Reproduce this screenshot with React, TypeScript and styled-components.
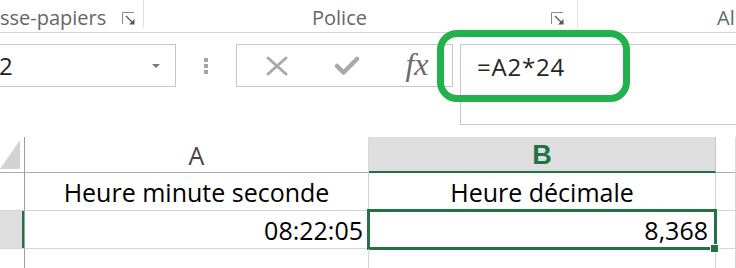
import React from 'react';
import styled, { createGlobalStyle } from 'styled-components';

// Global page reset
const GlobalStyle = createGlobalStyle`
  html, body {
    margin: 0;
    padding: 0;
    background: #ffffff;
    overflow: hidden;
  }
  body {
    width: 736px;
    height: 268px;
    font-family: "Open Sans", "Noto Sans", sans-serif;
  }
`;

const Screen = styled.div`
  position: relative;
  width: 736px;
  height: 268px;
  overflow: hidden;
`;

// Ribbon group labels
const Ribbon = styled.div`
  display: flex;
  height: 32px;
  border-bottom: 1px solid #d6d6d6;
`;

const Group = styled.div<{ $width?: number }>`
  display: flex;
  align-items: flex-start;
  width: ${p => (p.$width ? `${p.$width}px` : 'auto')};
  flex: ${p => (p.$width ? 'none' : '1')};
  height: 28px;
  border-right: ${p => (p.$width ? '1px solid #e1e1e1' : 'none')};
`;

const GroupLabel = styled.div<{ $align?: string; $pad?: number }>`
  flex: 1;
  text-align: ${p => p.$align || 'center'};
  padding-left: ${p => p.$pad || 0}px;
  font-size: 20px;
  line-height: 34px;
  margin-top: 1px;
  color: #666666;
  white-space: nowrap;
`;

const Launcher = styled.svg`
  flex: none;
  width: 13px;
  height: 13px;
  margin: 12px 13px 0 16px;
`;

// Formula bar
const FormulaRow = styled.div`
  display: flex;
  align-items: flex-start;
  padding-top: 11px;
  height: 81px;
`;

const NameBox = styled.div`
  flex: none;
  display: flex;
  align-items: center;
  width: 175px;
  height: 41px;
  border: 1px solid #c6c6c6;
  border-left: none;
  font-size: 24px;
  color: #222;
`;

const NameText = styled.span`
  flex: 1;
  margin-left: -1px;
`;

const DropArrow = styled.span`
  width: 0;
  height: 0;
  margin-right: 15px;
  border-left: 4px solid transparent;
  border-right: 4px solid transparent;
  border-top: 4px solid #777;
`;

const Grip = styled.div`
  flex: none;
  display: flex;
  flex-direction: column;
  gap: 2px;
  width: 4px;
  margin: 14px 28px 0 28px;
`;

const GripDot = styled.span`
  width: 4px;
  height: 4px;
  background: #a4a4a4;
`;

const ButtonBox = styled.div`
  flex: none;
  display: flex;
  align-items: center;
  box-sizing: border-box;
  width: 217px;
  height: 43px;
  padding-left: 5px;
  border: 1px solid #c6c6c6;
`;

const ToolSlot = styled.div`
  width: 70px;
  display: flex;
  justify-content: center;
  align-items: center;
`;

const Fx = styled.span`
  font-family: "Liberation Serif", "DejaVu Serif", serif;
  font-style: italic;
  font-size: 32px;
  color: #6a6a6a;
  line-height: 30px;
  margin-top: -4px;
`;

const FormulaInput = styled.div`
  flex: 1;
  height: 79px;
  margin-left: 7px;
  margin-right: -10px;
  border: 1px solid #c6c6c6;
  padding-left: 16px;
  font-size: 24px;
  letter-spacing: 0.8px;
  line-height: 44px;
  color: #262626;
`;

// Annotation drawn over the formula bar
const Highlight = styled.div`
  position: absolute;
  left: 437px;
  top: 30px;
  width: 193px;
  height: 72px;
  box-sizing: border-box;
  border: 7px solid #22b14c;
  border-radius: 20px;
  pointer-events: none;
`;

// Sheet grid
const Sheet = styled.div`
  display: grid;
  grid-template-columns: 25px 344px 347px 1fr;
  grid-template-rows: 36px 38px 38px 38px;
  margin-top: 12px;
  font-family: "Open Sans", "Noto Sans", sans-serif;
  font-size: 25px;
`;

const Corner = styled.div`
  border-right: 1px solid #9e9e9e;
  border-bottom: 1px solid #ababab;
  display: flex;
  align-items: flex-end;
  padding-bottom: 3px;
  box-sizing: border-box;
`;

const ColHeader = styled.div<{ $active?: boolean }>`
  box-sizing: border-box;
  display: flex;
  justify-content: center;
  align-items: center;
  background: ${p => (p.$active ? '#dedede' : '#ffffff')};
  border-right: 1px solid ${p => (p.$active ? '#c6c6c6' : '#dadada')};
  border-bottom: ${p => (p.$active ? '2px solid #217346' : '1px solid #ababab')};
  color: ${p => (p.$active ? '#217346' : '#444444')};
  font-weight: ${p => (p.$active ? 700 : 400)};
  font-family: ${p => (p.$active ? '"Liberation Sans", sans-serif' : 'inherit')};
  font-size: ${p => (p.$active ? '27px' : '25px')};
  line-height: 1;
  padding-top: 2px;
`;

const RowHeader = styled.div<{ $active?: boolean }>`
  box-sizing: border-box;
  background: ${p => (p.$active ? '#dedede' : '#ffffff')};
  border-right: 1px solid #9e9e9e;
  border-bottom: 1px solid #d4d4d4;
  box-shadow: ${p => (p.$active ? 'inset -2px 0 0 #217346' : 'none')};
`;

const Cell = styled.div<{ $align?: string; $pad?: number }>`
  position: relative;
  box-sizing: border-box;
  display: flex;
  align-items: center;
  justify-content: ${p => (p.$align === 'right' ? 'flex-end' : p.$align === 'left' ? 'flex-start' : 'center')};
  padding-right: ${p => p.$pad || 0}px;
  border-right: 1px solid #d4d4d4;
  border-bottom: 1px solid #d4d4d4;
  color: #000000;
  white-space: nowrap;
  line-height: 1;
  padding-top: 2px;
`;

// Active cell with its selection frame and fill handle
const ActiveCell = styled(Cell)`
  &::after {
    content: '';
    position: absolute;
    left: -2px;
    top: -2px;
    right: -2px;
    bottom: -2px;
    border: 3px solid #217346;
    pointer-events: none;
  }
  &::before {
    content: '';
    position: absolute;
    right: -4px;
    bottom: -5px;
    width: 7px;
    height: 7px;
    background: #217346;
    border: 1px solid #ffffff;
    z-index: 2;
  }
`;

const LauncherIcon = () => (
  <Launcher viewBox="0 0 13 13">
    <path d="M0.5 12V0.5H12" fill="none" stroke="#8a8a8a" strokeWidth="1" />
    <path d="M4 4L10 10" stroke="#555" strokeWidth="1.3" />
    <polygon points="12.5,7 12.5,12.5 7,12.5" fill="#555" />
  </Launcher>
);

const App: React.FC = () => {
  return (
    <Screen>
      <GlobalStyle />
      <Ribbon>
        <Group $width={143}>
          <GroupLabel $align="right">sse-papiers</GroupLabel>
          <LauncherIcon />
        </Group>
        <Group $width={433}>
          <GroupLabel>Police</GroupLabel>
          <LauncherIcon />
        </Group>
        <Group>
          <GroupLabel $align="left" $pad={139}>Al</GroupLabel>
        </Group>
      </Ribbon>

      <FormulaRow>
        <NameBox>
          <NameText>2</NameText>
          <DropArrow />
        </NameBox>
        <Grip>
          <GripDot />
          <GripDot />
          <GripDot />
        </Grip>
        <ButtonBox>
          <ToolSlot>
            <svg width="24" height="22" viewBox="0 0 24 22">
              <path d="M3 3L21 19M21 3L3 19" stroke="#a9a9a9" strokeWidth="3" strokeLinecap="round" />
            </svg>
          </ToolSlot>
          <ToolSlot>
            <svg width="26" height="22" viewBox="0 0 26 22">
              <path d="M3 11L9.5 17.5L23 4" fill="none" stroke="#a9a9a9" strokeWidth="4.5" strokeLinecap="round" strokeLinejoin="round" />
            </svg>
          </ToolSlot>
          <ToolSlot>
            <Fx>fx</Fx>
          </ToolSlot>
        </ButtonBox>
        <FormulaInput>=A2*24</FormulaInput>
      </FormulaRow>

      <Sheet>
        <Corner>
          <svg width="21" height="29" viewBox="0 0 21 29">
            <polygon points="0,29 20,0 20,29" fill="#d3d3d3" />
          </svg>
        </Corner>
        <ColHeader>A</ColHeader>
        <ColHeader $active>B</ColHeader>
        <ColHeader />

        <RowHeader />
        <Cell>Heure minute seconde</Cell>
        <Cell>Heure décimale</Cell>
        <Cell />

        <RowHeader $active />
        <Cell $align="right" $pad={5}>08:22:05</Cell>
        <ActiveCell $align="right" $pad={7}>8,368</ActiveCell>
        <Cell />

        <RowHeader />
        <Cell />
        <Cell />
        <Cell />
      </Sheet>

      <Highlight />
    </Screen>
  );
};

export default App;
